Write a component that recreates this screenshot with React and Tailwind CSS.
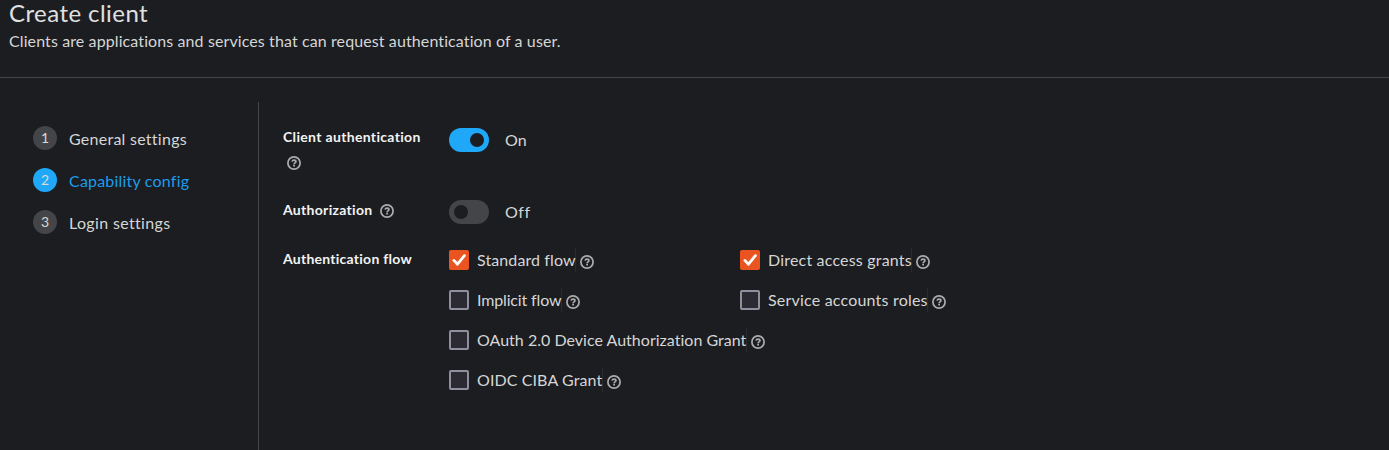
function HelpIcon({ className = '' }) {
  return (
    <svg viewBox="0 0 14 14" className={`size-3.5 shrink-0 ${className}`} fill="none" stroke="#aaabac">
      <circle cx="7" cy="7" r="6.1" strokeWidth="1.75" />
      <path d="M5.1 5.65C5.3 4.7 6 4.2 7 4.2c1.1 0 1.9.6 1.9 1.5 0 1.2-1.8 1.2-1.8 2.5" strokeWidth="1.7" />
      <path d="M6.2 9.7H8" strokeWidth="1.7" />
    </svg>
  )
}

function Step({ number, title, active, tracking }) {
  return (
    <li className="flex h-6 items-center">
      <span
        className={`flex size-6 items-center justify-center rounded-full text-sm leading-6 text-[#d8d8d8] ${active ? 'bg-[#1fa7f8]' : 'bg-[#444548]'}`}
      >
        {number}
      </span>
      <span className={`ml-3 pt-0.5 leading-6 ${tracking} ${active ? 'text-[#1d9cea]' : 'text-[#d6d6d6]'}`}>{title}</span>
    </li>
  )
}

function Toggle({ on }) {
  return (
    <span
      role="switch"
      aria-checked={on}
      className={`flex h-6 w-10 items-center rounded-full px-[5px] ${on ? 'justify-end bg-[#1fa7f8]' : 'justify-start bg-[#444548]'}`}
    >
      <span className="size-3.5 rounded-full bg-[#1b1d21]" />
    </span>
  )
}

function FlowOption({ label, checked, labelClass, className = '' }) {
  return (
    <div className={`flex h-6 items-center ${className}`}>
      <span
        role="checkbox"
        aria-checked={!!checked}
        className={`flex size-5 items-center justify-center rounded-xs ${checked ? 'bg-[#e95420]' : 'border-2 border-[#8f8f9d] bg-[#2b2a33]'}`}
      >
        {checked && (
          <svg viewBox="0 0 20 20" className="size-5" fill="none" stroke="white" strokeWidth="2.8" strokeLinecap="round" strokeLinejoin="round">
            <path d="M4.9 10.4 8.5 14.2 15.4 5.7" />
          </svg>
        )}
      </span>
      <span className={`ml-2 h-6 border-r border-[#292b2f] leading-6 whitespace-nowrap ${labelClass}`}>{label}</span>
      <HelpIcon className="mt-1 ml-1" />
    </div>
  )
}

export default function App() {
  return (
    <div className="flex h-[450px] w-full flex-col overflow-hidden bg-[#1b1d21] font-['Lato',sans-serif] text-base text-[#d6d6d6] [font-variant-ligatures:none]">
      <header className="h-[78px] shrink-0 border-b border-[#444548] pl-[9px]">
        <h1 className="text-2xl leading-[26px] tracking-[0.44px] text-[#e0e0e0]">Create client</h1>
        <p className="mt-[3px] leading-6 tracking-[0.105px]">Clients are applications and services that can request authentication of a user.</p>
      </header>
      <div className="flex flex-1 pt-6">
        <nav className="w-[259px] shrink-0 border-r border-[#444548] pt-6 pl-[33px]">
          <ol className="flex flex-col gap-[18px]">
            <Step number="1" title="General settings" tracking="tracking-[0.26px]" />
            <Step number="2" title="Capability config" tracking="tracking-[0.2px]" active />
            <Step number="3" title="Login settings" tracking="tracking-[0.34px]" />
          </ol>
        </nav>
        <main className="flex-1 pt-[26px] pl-6">
          <div className="flex h-[72px]">
            <div className="-mt-0.5 w-[166px] text-sm font-bold text-[#f3f3f3]">
              <div className="leading-[22px] tracking-[0.33px]">Client authentication</div>
              <HelpIcon className="mt-2 ml-1" />
            </div>
            <Toggle on />
            <span className="ml-4 leading-6">On</span>
          </div>
          <div className="flex h-12">
            <div className="flex w-[166px] text-sm font-bold text-[#f3f3f3]">
              <span className="leading-5 tracking-[0.3px]">Authorization</span>
              <HelpIcon className="mt-1 ml-2" />
            </div>
            <Toggle on={false} />
            <span className="ml-4 leading-6 tracking-[0.6px]">Off</span>
          </div>
          <div className="flex">
            <div className="w-[166px] text-sm leading-[22px] font-bold tracking-[0.25px] text-[#f3f3f3]">Authentication flow</div>
            <div className="grid grid-cols-[291px_291px] gap-y-4">
              <FlowOption label="Standard flow" checked labelClass="w-[99px] tracking-[0.1px]" />
              <FlowOption label="Direct access grants" checked labelClass="w-36 tracking-[0.19px]" />
              <FlowOption label="Implicit flow" labelClass="w-[85px] tracking-[-0.15px]" />
              <FlowOption label="Service accounts roles" labelClass="w-40 tracking-[0.2px]" />
              <FlowOption label="OAuth 2.0 Device Authorization Grant" labelClass="w-[270px] tracking-[0.02px]" className="col-span-2" />
              <FlowOption label="OIDC CIBA Grant" labelClass="w-[126px] tracking-[0.1px]" className="col-span-2" />
            </div>
          </div>
        </main>
      </div>
    </div>
  )
}
